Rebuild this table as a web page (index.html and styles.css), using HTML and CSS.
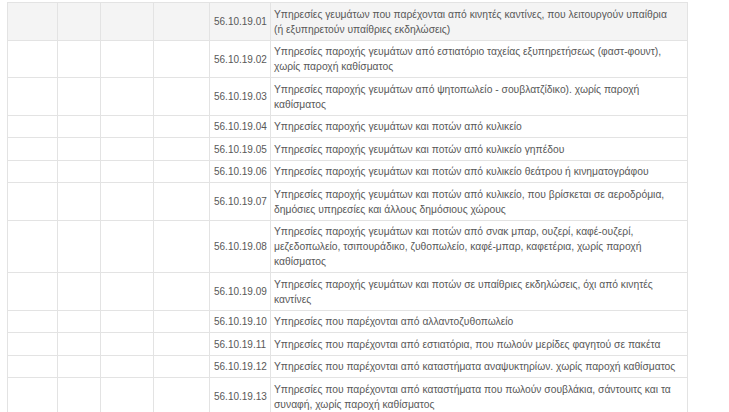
FILE: index.html
```html
<!DOCTYPE html>
<html lang="el">
<head>
    <meta charset="UTF-8">
    <meta name="viewport" content="width=device-width, initial-scale=1.0">
    <title>ΚΑΔ 56.10.19</title>
    <link rel="stylesheet" href="styles.css">
</head>
<body>
    <table class="kad-table">
        <colgroup>
            <col class="c1"><col class="c2"><col class="c3"><col class="c4"><col class="c-code"><col>
        </colgroup>
        <tbody>
            <tr class="active">
                <td></td><td></td><td></td><td></td>
                <td class="code">56.10.19.01</td>
                <td class="desc">Υπηρεσίες γευμάτων που παρέχονται από κινητές καντίνες, που λειτουργούν υπαίθρια<br>(ή εξυπηρετούν υπαίθριες εκδηλώσεις)</td>
            </tr>
            <tr>
                <td></td><td></td><td></td><td></td>
                <td class="code">56.10.19.02</td>
                <td class="desc">Υπηρεσίες παροχής γευμάτων από εστιατόριο ταχείας εξυπηρετήσεως (φαστ-φουντ),<br>χωρίς παροχή καθίσματος</td>
            </tr>
            <tr>
                <td></td><td></td><td></td><td></td>
                <td class="code">56.10.19.03</td>
                <td class="desc">Υπηρεσίες παροχής γευμάτων από ψητοπωλείο - σουβλατζίδικο). χωρίς παροχή<br>καθίσματος</td>
            </tr>
            <tr>
                <td></td><td></td><td></td><td></td>
                <td class="code">56.10.19.04</td>
                <td class="desc">Υπηρεσίες παροχής γευμάτων και ποτών από κυλικείο</td>
            </tr>
            <tr>
                <td></td><td></td><td></td><td></td>
                <td class="code">56.10.19.05</td>
                <td class="desc">Υπηρεσίες παροχής γευμάτων και ποτών από κυλικείο γηπέδου</td>
            </tr>
            <tr>
                <td></td><td></td><td></td><td></td>
                <td class="code">56.10.19.06</td>
                <td class="desc">Υπηρεσίες παροχής γευμάτων και ποτών από κυλικείο θεάτρου ή κινηματογράφου</td>
            </tr>
            <tr>
                <td></td><td></td><td></td><td></td>
                <td class="code">56.10.19.07</td>
                <td class="desc">Υπηρεσίες παροχής γευμάτων και ποτών από κυλικείο, που βρίσκεται σε αεροδρόμια,<br>δημόσιες υπηρεσίες και άλλους δημόσιους χώρους</td>
            </tr>
            <tr>
                <td></td><td></td><td></td><td></td>
                <td class="code">56.10.19.08</td>
                <td class="desc">Υπηρεσίες παροχής γευμάτων και ποτών από σνακ μπαρ, ουζερί, καφέ-ουζερί,<br>μεζεδοπωλείο, τσιπουράδικο, ζυθοπωλείο, καφέ-μπαρ, καφετέρια, χωρίς παροχή<br>καθίσματος</td>
            </tr>
            <tr>
                <td></td><td></td><td></td><td></td>
                <td class="code">56.10.19.09</td>
                <td class="desc">Υπηρεσίες παροχής γευμάτων και ποτών σε υπαίθριες εκδηλώσεις, όχι από κινητές<br>καντίνες</td>
            </tr>
            <tr>
                <td></td><td></td><td></td><td></td>
                <td class="code">56.10.19.10</td>
                <td class="desc">Υπηρεσίες που παρέχονται από αλλαντοζυθοπωλείο</td>
            </tr>
            <tr>
                <td></td><td></td><td></td><td></td>
                <td class="code">56.10.19.11</td>
                <td class="desc">Υπηρεσίες που παρέχονται από εστιατόρια, που πωλούν μερίδες φαγητού σε πακέτα</td>
            </tr>
            <tr>
                <td></td><td></td><td></td><td></td>
                <td class="code">56.10.19.12</td>
                <td class="desc">Υπηρεσίες που παρέχονται από καταστήματα αναψυκτηρίων. χωρίς παροχή καθίσματος</td>
            </tr>
            <tr>
                <td></td><td></td><td></td><td></td>
                <td class="code">56.10.19.13</td>
                <td class="desc">Υπηρεσίες που παρέχονται από καταστήματα που πωλούν σουβλάκια, σάντουιτς και τα<br>συναφή, χωρίς παροχή καθίσματος</td>
            </tr>
        </tbody>
    </table>
</body>
</html>
```

FILE: styles.css
```css
body {
    margin: 0;
    padding: 2px 0 0 7px;
    background: #fff;
    font-family: "Liberation Sans", Arial, sans-serif;
    font-size: 10.3px;
    color: #585858;
}
.kad-table {
    width: 681px;
    border-collapse: collapse;
    table-layout: fixed;
}
.kad-table .c1 { width: 50px; }
.kad-table .c2 { width: 43px; }
.kad-table .c3 { width: 53px; }
.kad-table .c4 { width: 56px; }
.kad-table .c-code { width: 61px; }
.kad-table td {
    border: 1px solid #e3e3e3;
    padding: 3.5px 4px 3px;
    line-height: 15px;
    vertical-align: middle;
}
.kad-table td.code {
    font-size: 10px;
    white-space: nowrap;
}
.kad-table td.desc {
    padding-left: 3px;
    padding-right: 1px;
    white-space: nowrap;
}
.kad-table tr.active td {
    background-color: #f4f4f4;
}
```
